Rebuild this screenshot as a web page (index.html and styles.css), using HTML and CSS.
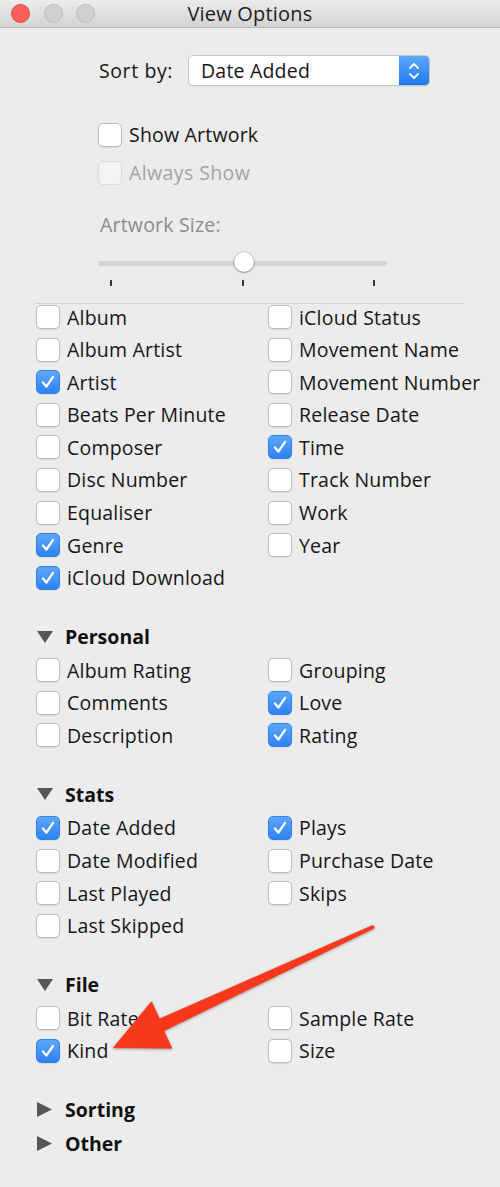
FILE: index.html
```html
<!DOCTYPE html>
<html>
<head>
<meta charset="utf-8">
<link rel="stylesheet" href="styles.css">
</head>
<body>
<div class="window">
  <header class="titlebar">
    <div class="lights">
      <span class="light red"></span>
      <span class="light gray"></span>
      <span class="light gray"></span>
    </div>
    <div class="title">View Options</div>
    <div></div>
  </header>

  <section class="top">
    <div class="sort-row">
      <span class="sort-label">Sort by:</span>
      <div class="popup">
        <span class="popup-text">Date Added</span>
        <span class="popup-btn">
          <svg width="14" height="22" viewBox="0 0 14 22"><path d="M3 8 L7 4 L11 8 M3 14 L7 18 L11 14" fill="none" stroke="#fff" stroke-width="1.8" stroke-linecap="round" stroke-linejoin="round"/></svg>
        </span>
      </div>
    </div>
    <div class="check-row show-row"><span class="cb"></span><span>Show Artwork</span></div>
    <div class="check-row always-row"><span class="cb disabled"></span><span>Always Show</span></div>
    <div class="size-label">Artwork Size:</div>
    <div class="slider"><div class="track"></div><div class="knob"></div></div>
    <div class="ticks"><span class="tick"></span><span class="tick"></span><span class="tick"></span></div>
  </section>

  <div class="separator"></div>

  <div class="content">
    <div class="grid first">
      <div class="item"><span class="cb"></span>Album</div>
      <div class="item"><span class="cb"></span>iCloud Status</div>
      <div class="item"><span class="cb"></span>Album Artist</div>
      <div class="item"><span class="cb"></span>Movement Name</div>
      <div class="item"><span class="cb on"><svg viewBox="0 0 24 24"><path d="M6.5 12.5 L10.2 17 L17.5 6.5"/></svg></span>Artist</div>
      <div class="item"><span class="cb"></span>Movement Number</div>
      <div class="item"><span class="cb"></span>Beats Per Minute</div>
      <div class="item"><span class="cb"></span>Release Date</div>
      <div class="item"><span class="cb"></span>Composer</div>
      <div class="item"><span class="cb on"><svg viewBox="0 0 24 24"><path d="M6.5 12.5 L10.2 17 L17.5 6.5"/></svg></span>Time</div>
      <div class="item"><span class="cb"></span>Disc Number</div>
      <div class="item"><span class="cb"></span>Track Number</div>
      <div class="item"><span class="cb"></span>Equaliser</div>
      <div class="item"><span class="cb"></span>Work</div>
      <div class="item"><span class="cb on"><svg viewBox="0 0 24 24"><path d="M6.5 12.5 L10.2 17 L17.5 6.5"/></svg></span>Genre</div>
      <div class="item"><span class="cb"></span>Year</div>
      <div class="item"><span class="cb on"><svg viewBox="0 0 24 24"><path d="M6.5 12.5 L10.2 17 L17.5 6.5"/></svg></span>iCloud Download</div>
      <div></div>
    </div>

    <div class="heading"><span class="tri"><svg width="16" height="12" viewBox="0 0 16 12"><path d="M0 0 H16 L8 12 Z" fill="#555"/></svg></span>Personal</div>
    <div class="grid">
      <div class="item"><span class="cb"></span>Album Rating</div>
      <div class="item"><span class="cb"></span>Grouping</div>
      <div class="item"><span class="cb"></span>Comments</div>
      <div class="item"><span class="cb on"><svg viewBox="0 0 24 24"><path d="M6.5 12.5 L10.2 17 L17.5 6.5"/></svg></span>Love</div>
      <div class="item"><span class="cb"></span>Description</div>
      <div class="item"><span class="cb on"><svg viewBox="0 0 24 24"><path d="M6.5 12.5 L10.2 17 L17.5 6.5"/></svg></span>Rating</div>
    </div>

    <div class="heading"><span class="tri"><svg width="16" height="12" viewBox="0 0 16 12"><path d="M0 0 H16 L8 12 Z" fill="#555"/></svg></span>Stats</div>
    <div class="grid">
      <div class="item"><span class="cb on"><svg viewBox="0 0 24 24"><path d="M6.5 12.5 L10.2 17 L17.5 6.5"/></svg></span>Date Added</div>
      <div class="item"><span class="cb on"><svg viewBox="0 0 24 24"><path d="M6.5 12.5 L10.2 17 L17.5 6.5"/></svg></span>Plays</div>
      <div class="item"><span class="cb"></span>Date Modified</div>
      <div class="item"><span class="cb"></span>Purchase Date</div>
      <div class="item"><span class="cb"></span>Last Played</div>
      <div class="item"><span class="cb"></span>Skips</div>
      <div class="item"><span class="cb"></span>Last Skipped</div>
      <div></div>
    </div>

    <div class="heading"><span class="tri"><svg width="16" height="12" viewBox="0 0 16 12"><path d="M0 0 H16 L8 12 Z" fill="#555"/></svg></span>File</div>
    <div class="grid">
      <div class="item"><span class="cb"></span>Bit Rate</div>
      <div class="item"><span class="cb"></span>Sample Rate</div>
      <div class="item"><span class="cb on"><svg viewBox="0 0 24 24"><path d="M6.5 12.5 L10.2 17 L17.5 6.5"/></svg></span>Kind</div>
      <div class="item"><span class="cb"></span>Size</div>
    </div>

    <div class="heading"><span class="tri"><svg width="15" height="15" viewBox="0 0 15 15"><path d="M0 0 L15 7.5 L0 15 Z" fill="#555"/></svg></span>Sorting</div>
    <div class="heading tight"><span class="tri"><svg width="15" height="15" viewBox="0 0 15 15"><path d="M0 0 L15 7.5 L0 15 Z" fill="#555"/></svg></span>Other</div>
  </div>

  <svg class="arrow" width="500" height="1187" viewBox="0 0 500 1187">
    <polygon points="372.4,925.6 159.5,1019.0 151.5,1001.8 113.3,1047.7 171.8,1048.2 163.8,1030.8 373.6,928.4" fill="#f8381c" stroke="#f8381c" stroke-width="0.8" stroke-linejoin="round"/>
    <circle cx="373" cy="927" r="1.6" fill="#f8381c"/>
  </svg>
</div>
</body>
</html>
```

FILE: styles.css
```css
body {
  margin: 0;
  background: #ececec;
  font-family: "Open Sans", "Liberation Sans", sans-serif;
  font-size: 19.5px;
  letter-spacing: 0.2px;
  color: #161616;
}

.window {
  position: relative;
  height: 1187px;
  overflow: hidden;
}

.titlebar {
  height: 28px;
  box-sizing: border-box;
  border-bottom: 1px solid #b4b4b4;
  background: linear-gradient(#ebebeb, #d4d4d4);
  display: grid;
  grid-template-columns: 1fr auto 1fr;
  align-items: center;
}

.lights {
  display: flex;
  gap: 13.5px;
  padding-left: 11px;
}

.light {
  width: 19px;
  height: 19px;
  border-radius: 50%;
  box-sizing: border-box;
}

.light.red {
  background: #fc5f57;
  border: 1px solid #e0463f;
}

.light.gray {
  background: #d0d0d0;
  border: 1px solid #bcbcbc;
}

.title {
  font-size: 20px;
  color: #1c1c1c;
  line-height: 26px;
}

.top {
  padding-left: 98px;
}

.sort-row {
  display: flex;
  align-items: center;
  margin-top: 27px;
  height: 31px;
  padding-left: 1px;
}

.sort-label {
  width: 89px;
  letter-spacing: 0.6px;
}

.popup {
  display: flex;
  width: 242px;
  height: 31px;
  box-sizing: border-box;
  border: 1px solid #c6c6c6;
  border-radius: 5px;
  background: #fff;
  overflow: hidden;
  box-shadow: 0 1px 1px rgba(0, 0, 0, 0.06);
}

.popup-text {
  flex: 1;
  padding-left: 12px;
  display: flex;
  align-items: center;
}

.popup-btn {
  width: 30px;
  background: linear-gradient(#5ea8fb, #1e79ee);
  display: flex;
  align-items: center;
  justify-content: center;
}

.check-row {
  display: flex;
  align-items: center;
  gap: 7px;
  height: 25px;
}

.show-row {
  margin-top: 36px;
}

.always-row {
  margin-top: 13px;
  color: #a3a3a3;
  letter-spacing: 0.4px;
}

.size-label {
  margin-top: 28px;
  height: 24px;
  line-height: 24px;
  color: #8b8b8b;
  padding-left: 2px;
}

.slider {
  position: relative;
  width: 289px;
  height: 24px;
  margin-top: 14px;
}

.track {
  position: absolute;
  left: 0;
  right: 0;
  top: 10px;
  height: 5px;
  border-radius: 3px;
  background: #d4d4d4;
}

.knob {
  position: absolute;
  left: 136px;
  top: 1px;
  width: 20px;
  height: 20px;
  border-radius: 50%;
  background: #fff;
  box-shadow: 0 0 0 0.6px rgba(0, 0, 0, 0.22), 0 1px 2px rgba(0, 0, 0, 0.3);
}

.ticks {
  display: flex;
  justify-content: space-between;
  width: 289px;
  padding: 0 12px;
  box-sizing: border-box;
  margin-top: 5px;
}

.tick {
  width: 2px;
  height: 6px;
  background: #3a3a3a;
}

.separator {
  margin: 17px 0 0 35px;
  width: 428px;
  height: 1px;
  background: #d2d2d2;
}

.content {
  padding-left: 36px;
}

.grid {
  display: grid;
  grid-template-columns: 232px 1fr;
  grid-auto-rows: 32.7px;
}

.grid.first {
  margin-top: -3.3px;
  grid-auto-rows: 32.6px;
}

.item {
  display: flex;
  align-items: center;
  gap: 7px;
  white-space: nowrap;
}

.cb {
  width: 24px;
  height: 24px;
  box-sizing: border-box;
  border: 1px solid #bcbcbc;
  border-radius: 5px;
  background: #fff;
  flex: none;
  box-shadow: 0 0.5px 1px rgba(0, 0, 0, 0.08);
}

.cb.disabled {
  background: #f3f3f3;
  border-color: #dadada;
  box-shadow: none;
}

.cb.on {
  background: linear-gradient(#5ea6fa, #2c82f1);
  border-color: #3181e8;
}

.cb svg {
  display: block;
  width: 22px;
  height: 22px;
}

.cb svg path {
  fill: none;
  stroke: #fff;
  stroke-width: 2.5;
  stroke-linecap: round;
  stroke-linejoin: round;
}

.heading {
  display: flex;
  align-items: center;
  height: 34px;
  margin-top: 25.7px;
  font-weight: 700;
  letter-spacing: 0;
  color: #111;
}

.heading.tight {
  margin-top: 0;
}

.tri {
  width: 28px;
  display: flex;
  align-items: center;
  padding-left: 1px;
}

.tri svg {
  display: block;
}

.arrow {
  position: absolute;
  top: 0;
  left: 0;
  pointer-events: none;
  filter: drop-shadow(0 1px 1.5px rgba(0, 0, 0, 0.3));
}
```
